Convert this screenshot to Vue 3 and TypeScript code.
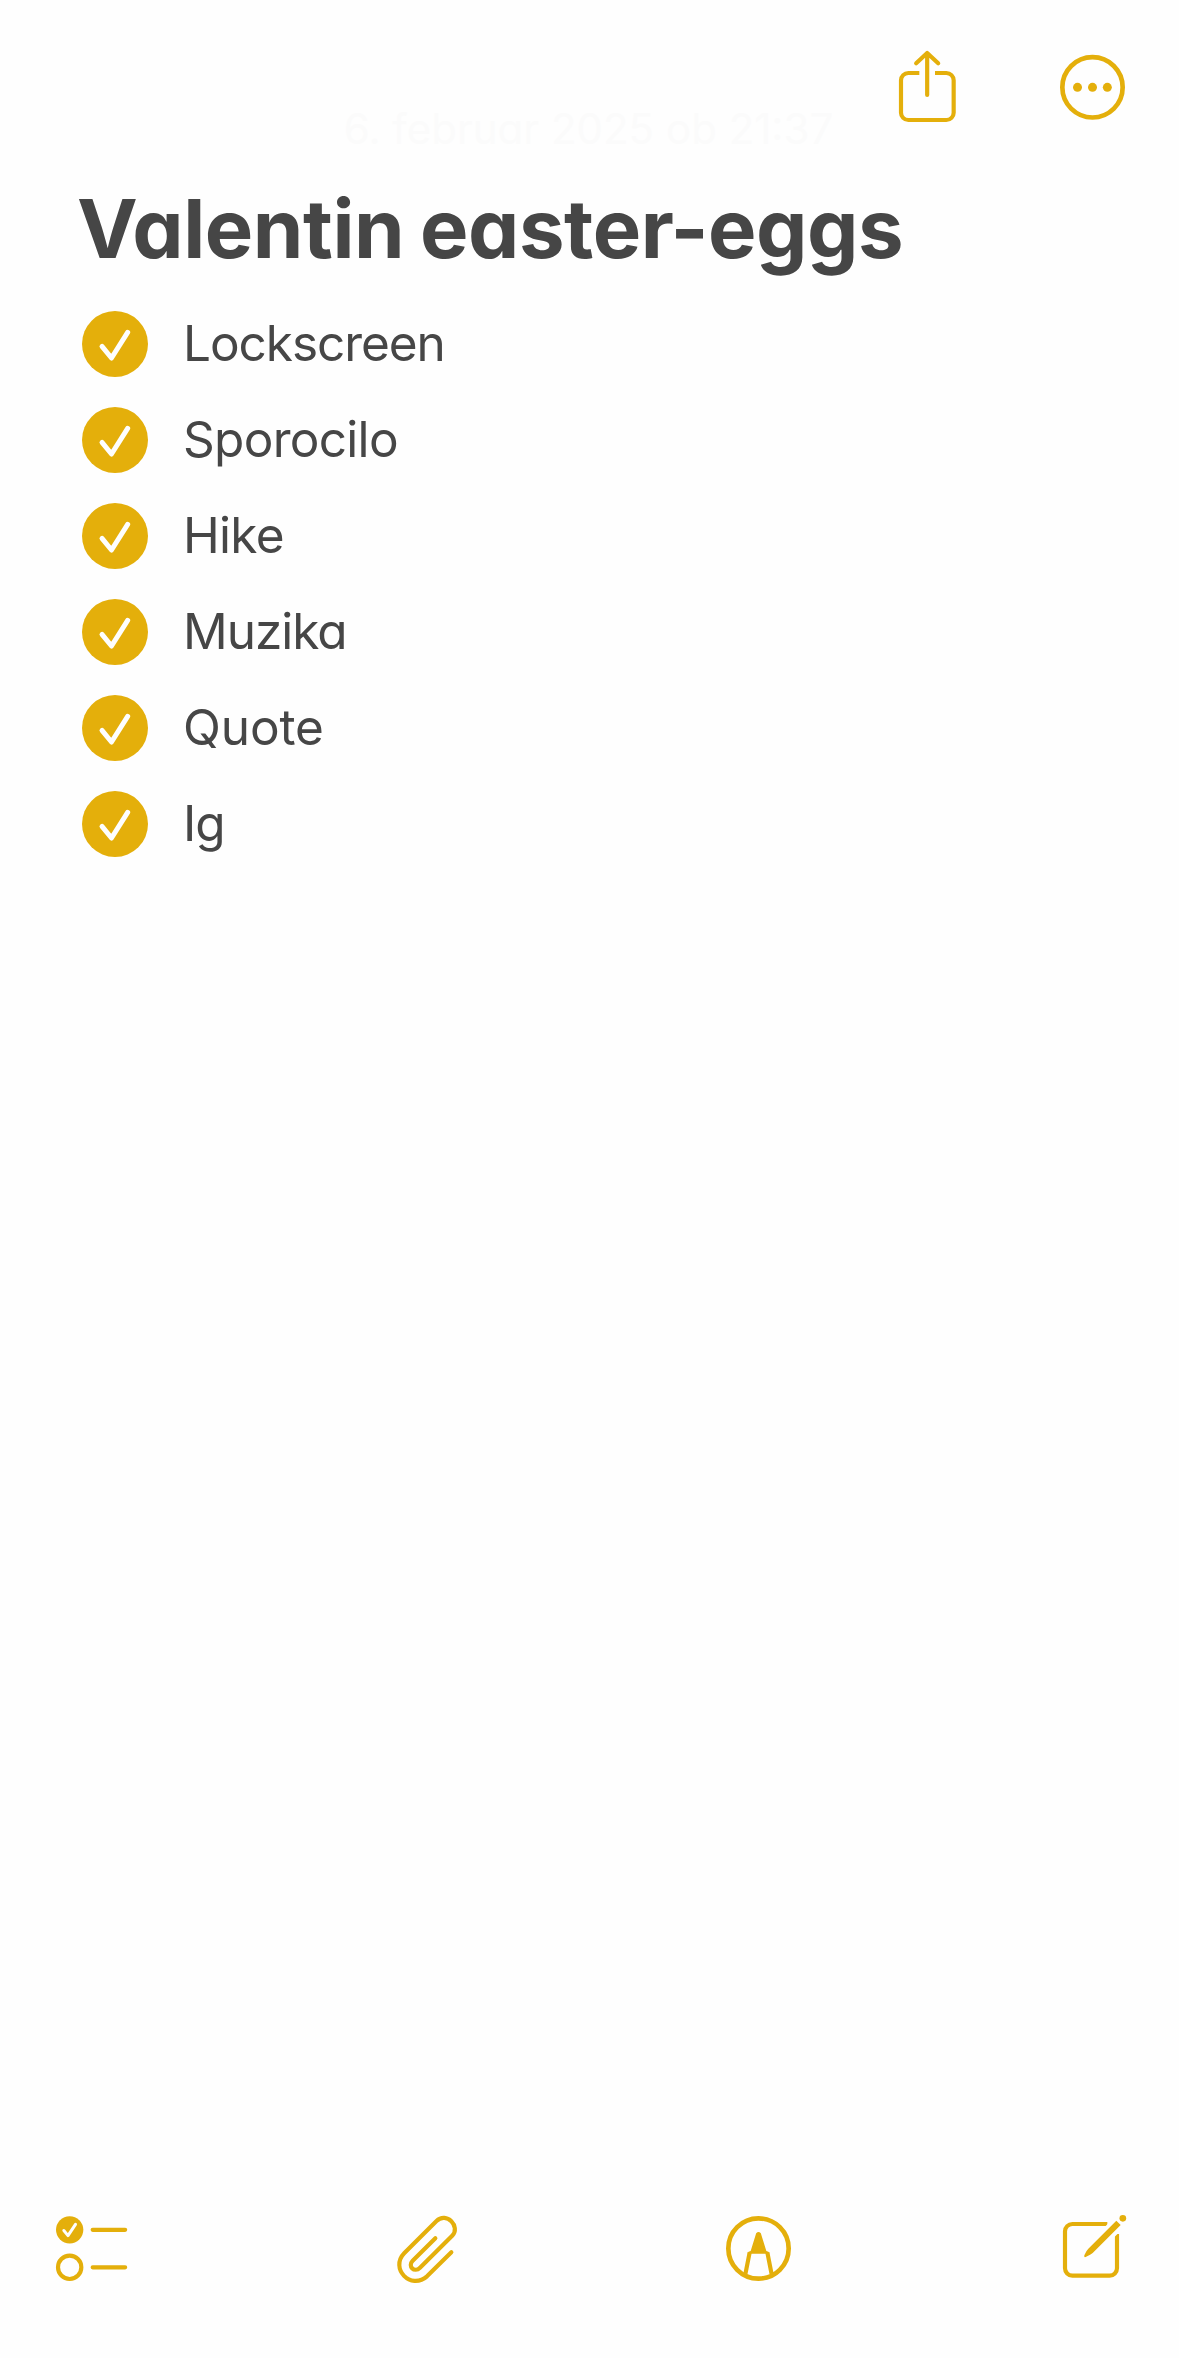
<script setup lang="ts">
interface ChecklistItem {
  label: string
  spacing: number
}

const title = 'Valentin easter-eggs'
const edited = '6. februar 2025 ob 21:37'

const items: ChecklistItem[] = [
  { label: 'Lockscreen', spacing: -1.05 },
  { label: 'Sporocilo', spacing: -0.7 },
  { label: 'Hike', spacing: -0.7 },
  { label: 'Muzika', spacing: -1 },
  { label: 'Quote', spacing: -0.1 },
  { label: 'Ig', spacing: -1 },
]
</script>

<template>
  <div class="note">
    <header class="topbar">
      <button class="tool" aria-label="Share">
        <svg viewBox="51 21 300 300">
          <path class="line" d="M178 129H145a22 22 0 0 0-22 22V248a22 22 0 0 0 22 22H259a22 22 0 0 0 22-22V151a22 22 0 0 0-22-22H225" />
          <path class="line round" d="M201.500 69V195M168.500 100L201.500 69L234.500 100" />
        </svg>
      </button>
      <button class="tool" aria-label="More">
        <svg viewBox="546 21 300 300">
          <circle class="line ring" cx="697.500" cy="172" r="90.500" />
          <circle class="solid" cx="652.500" cy="172" r="13.500" />
          <circle class="solid" cx="697.500" cy="172" r="13.500" />
          <circle class="solid" cx="742" cy="172" r="13.500" />
        </svg>
      </button>
    </header>

    <main class="content">
      <p class="date">{{ edited }}</p>
      <h1 class="title">{{ title }}</h1>
      <ul class="list">
        <li v-for="item in items" :key="item.label" class="item">
          <svg class="check" viewBox="0 0 198 198">
            <circle class="solid" cx="99" cy="99" r="99" />
            <path class="tick" d="M60 106L88.500 141L137 64" />
          </svg>
          <span class="label" :style="{ letterSpacing: item.spacing + 'px' }">{{ item.label }}</span>
        </li>
      </ul>
    </main>

    <footer class="bottombar">
      <button class="tool" aria-label="Checklist">
        <svg viewBox="0 0 300 300">
          <circle class="solid" cx="89" cy="89.500" r="41" />
          <path class="tick small" d="M71.500 91.500L84 107L106.500 73" />
          <circle class="line" cx="89" cy="202" r="35" />
          <path class="line round" d="M158 89.500H255.500M158 202H255.500" />
        </svg>
      </button>
      <button class="tool" aria-label="Attach">
        <svg viewBox="-15 0 300 300">
          <path class="line round" d="M166 115L98 182.500C82 199 103 219.500 120 203L216.500 107.500C243 79 199 34 169.500 63L72.500 160C29 205 92 272 141 229L214 157" />
        </svg>
      </button>
      <button class="tool" aria-label="Markup">
        <svg viewBox="0 0 300 300">
          <circle class="line ring" cx="145.500" cy="145.500" r="90.500" />
          <path class="solid" d="M138.500 100Q145.500 92 152.500 100L169 153Q177 154 178 161H113Q114 154 122 153Z" />
          <path class="line" d="M119 157L106 223M172 157L185 223" />
        </svg>
      </button>
      <button class="tool" aria-label="New note">
        <svg viewBox="0 0 300 300">
          <path class="line" d="M187 72H82a22 22 0 0 0-22 22V205a22 22 0 0 0 22 22H194a22 22 0 0 0 22-22V102" />
          <path class="gap" d="M176 84L204 56L236 83L206 113Z" />
          <path class="solid" d="M214 62L227 75L143 159Q138 164 122 171Q116 173 118 166Q124 151 130 146Z" />
          <circle class="solid" cx="233.500" cy="55" r="10" />
        </svg>
      </button>
    </footer>
  </div>
</template>

<style>
body {
  margin: 0;
  background: #fefefe;
}
</style>

<style scoped>
.note {
  box-sizing: border-box;
  width: 1179px;
  height: 2358px;
  display: flex;
  flex-direction: column;
  overflow: hidden;
  background: #fefefe;
  color: #464646;
  font-family: Inter, "Liberation Sans", sans-serif;
  font-feature-settings: "cv11" 1;
}

.topbar {
  display: flex;
  justify-content: flex-end;
  gap: 65px;
  height: 67px;
  padding: 37px 37px 0 0;
}

.tool {
  flex: none;
  width: 100px;
  height: 100px;
  padding: 0;
  border: 0;
  background: none;
}

.tool svg {
  display: block;
  width: 100px;
  height: 100px;
}

.line {
  fill: none;
  stroke: #e4af0b;
  stroke-width: 12.500;
}

.ring {
  stroke-width: 14;
}

.round {
  stroke-linecap: round;
  stroke-linejoin: round;
}

.solid {
  fill: #e4af0b;
}

.gap {
  fill: #fefefe;
}

.tick {
  fill: none;
  stroke: #fefefe;
  stroke-width: 15;
  stroke-linecap: round;
  stroke-linejoin: round;
}

.tick.small {
  stroke-width: 9;
}

.content {
  flex: 1;
}

.date {
  margin: 0;
  padding-right: 2px;
  line-height: 50px;
  font-size: 42px;
  font-weight: 400;
  text-align: center;
  white-space: nowrap;
  color: #fbfbfb;
}

.title {
  margin: 25px 0 0 77px;
  line-height: 100px;
  font-size: 81.400px;
  font-weight: 700;
  letter-spacing: -0.450px;
  word-spacing: -3px;
  white-space: nowrap;
}

.list {
  margin: 16.500px 0 0;
  padding: 0 0 0 82px;
  list-style: none;
}

.item {
  display: flex;
  align-items: center;
  gap: 35px;
  height: 96px;
}

.check {
  flex: none;
  width: 66px;
  height: 66px;
}

.label {
  margin-top: -2px;
  font-size: 49.500px;
  line-height: 60px;
}

.bottombar {
  display: flex;
  justify-content: space-between;
  padding: 0 34px 58px 40px;
}
</style>
